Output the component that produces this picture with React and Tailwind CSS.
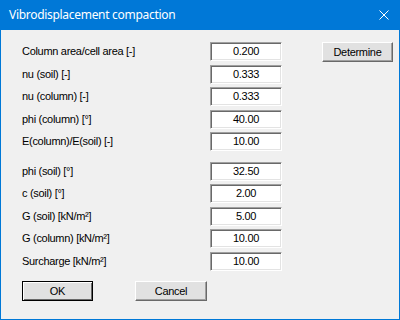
import React from "react";

const groupA = [
  ["Column area/cell area [-]", "0.200"],
  ["nu (soil) [-]", "0.333"],
  ["nu (column) [-]", "0.333"],
  ["phi (column) [°]", "40.00"],
  ["E(column)/E(soil) [-]", "10.00"],
];

const groupB = [
  ["phi (soil) [°]", "32.50"],
  ["c (soil) [°]", "2.00"],
  ["G (soil) [kN/m²]", "5.00"],
  ["G (column) [kN/m²]", "10.00"],
  ["Surcharge [kN/m²]", "10.00"],
];

function Field({ label, value, extra }) {
  return (
    <div className="flex h-[22.5px] items-start">
      <div className="w-[188px] h-[19px] flex items-center">{label}</div>
      <div className="w-[72px] h-[19px] flex items-center justify-center bg-white border border-[#a0a0a0] border-b-white border-r-white shadow-[inset_1px_1px_0_#696969,inset_-1px_-1px_0_#e3e3e3]">
        {value}
      </div>
      {extra}
    </div>
  );
}

function WinButton({ children, isDefault, className = "" }) {
  return (
    <button
      className={
        "h-[20px] w-[71px] flex items-center justify-center bg-[#e1e1e1] " +
        (isDefault
          ? "border border-black shadow-[inset_1px_1px_0_#fff,inset_-1px_-1px_0_#696969] "
          : "border border-white border-b-[#696969] border-r-[#696969] shadow-[inset_-1px_-1px_0_#a0a0a0] ") +
        className
      }
    >
      {children}
    </button>
  );
}

export default function App() {
  return (
    <div className="w-[400px] h-[320px] flex flex-col border border-t-0 border-[#0078d7] bg-[#f0f0f0] font-['Liberation_Sans',Arial,sans-serif] text-[11px] tracking-[-0.3px] text-black">
      <div className="h-[30px] bg-[#0078d7] flex items-center justify-between pl-[8px] pr-[9px] text-white">
        <span className="font-['Noto_Sans',sans-serif] text-[12px] tracking-[-0.3px]">
          Vibrodisplacement compaction
        </span>
        <svg width="10" height="10" viewBox="0 0 10 10" className="mr-[1px]">
          <path d="M0.5 0.5 L9.5 9.5 M9.5 0.5 L0.5 9.5" stroke="white" strokeWidth="1" />
        </svg>
      </div>
      <div className="flex-1 pl-[21px] pt-[12px]">
        {groupA.map(([l, v], i) => (
          <Field
            key={l}
            label={l}
            value={v}
            extra={
              i === 0 ? (
                <WinButton className="ml-[40px] w-[66px] h-[19px]">Determine</WinButton>
              ) : null
            }
          />
        ))}
        <div className="h-[7px]" />
        {groupB.map(([l, v]) => (
          <Field key={l} label={l} value={v} />
        ))}
        <div className="flex mt-[7px]">
          <WinButton isDefault>OK</WinButton>
          <WinButton className="ml-[42px] w-[72px]">Cancel</WinButton>
        </div>
      </div>
    </div>
  );
}
